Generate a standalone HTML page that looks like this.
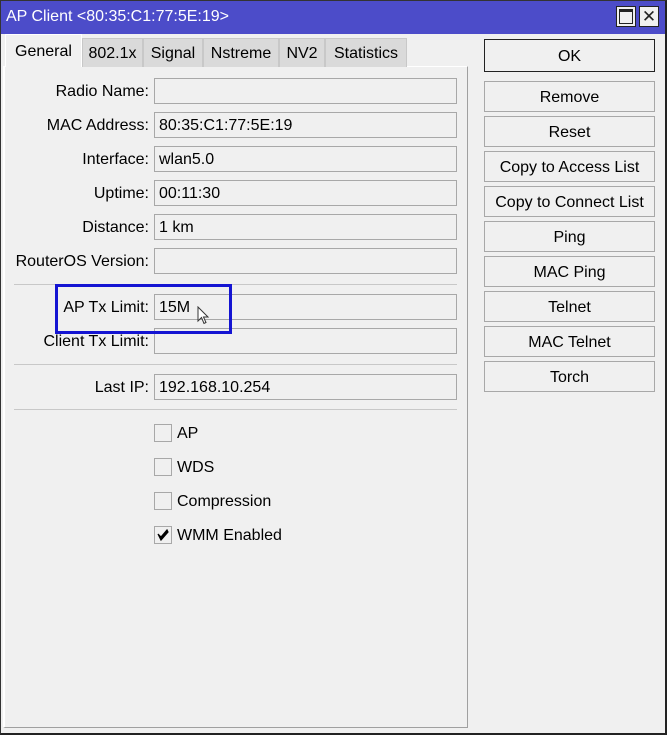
<!DOCTYPE html>
<html><head><style>
*{box-sizing:border-box;margin:0;padding:0}
body{width:667px;height:735px;background:#f0f0f0;font-family:"Liberation Sans",sans-serif;font-size:16px;color:#000;position:relative;overflow:hidden}
.win{position:absolute;left:0;top:0;width:667px;height:735px;background:#f0f0f0}
.frame{position:absolute;left:0;top:0;width:667px;height:735px;border:1px solid #333;border-right:2px solid #222;border-bottom:2px solid #222;pointer-events:none}
.title{position:absolute;left:0;top:0;width:667px;height:34px;background:#4c4cc9;color:#fff;font-size:16px;line-height:34px;padding-left:6px}
.tb{position:absolute;top:6px;width:20px;height:21px;background:#f0f0f0;border:1px solid #222}
.panel{position:absolute;left:3px;top:66px;width:465px;height:662px;border:1px solid #a0a0a0;border-left:2px solid #fff;border-top:1px solid #fff}
.tab{position:absolute;top:38px;height:29px;background:#dadada;border:1px solid #c8c8c8;border-bottom:none;line-height:29px;text-align:center}
.tab.a{background:#f0f0f0;top:34px;height:33px;border-color:#fff;line-height:33px}
.lbl{position:absolute;right:518px;text-align:right;white-space:nowrap;line-height:28px}
.fld{position:absolute;left:154px;width:303px;height:26px;border:1px solid #a8a8a8;background:#f0f0f0;line-height:26px;padding-left:4px}
.sep{position:absolute;left:14px;width:443px;height:1px;background:#c8c8c8}
.cb{position:absolute;left:154px;width:18px;height:18px;border:1px solid #a8a8a8;background:#f0f0f0}
.cbl{position:absolute;left:177px;line-height:20px}
.btn{position:absolute;left:484px;width:171px;height:31px;border:1px solid #a8a8a8;background:#f0f0f0;text-align:center;line-height:31px}
</style></head><body>
<div class="win">
<div class="title">AP Client &lt;80:35:C1:77:5E:19&gt;</div>
<div class="tb" style="left:616px"><div style="position:absolute;left:2px;top:2px;width:14px;height:15px;border:1px solid #222;border-top:3px solid #222"></div></div>
<div class="tb" style="left:639px;font-size:17px;text-align:center;line-height:19px;color:#222">✕</div>
<div class="panel"></div>
<div class="tab a" style="left:5px;width:77px">General</div>
<div class="tab" style="left:82px;width:61px">802.1x</div>
<div class="tab" style="left:143px;width:60px">Signal</div>
<div class="tab" style="left:203px;width:76px">Nstreme</div>
<div class="tab" style="left:279px;width:46px">NV2</div>
<div class="tab" style="left:325px;width:82px">Statistics</div>

<div class="lbl" style="top:78px">Radio Name:</div><div class="fld" style="top:78px"></div>
<div class="lbl" style="top:112px">MAC Address:</div><div class="fld" style="top:112px">80:35:C1:77:5E:19</div>
<div class="lbl" style="top:146px">Interface:</div><div class="fld" style="top:146px">wlan5.0</div>
<div class="lbl" style="top:180px">Uptime:</div><div class="fld" style="top:180px">00:11:30</div>
<div class="lbl" style="top:214px">Distance:</div><div class="fld" style="top:214px">1 km</div>
<div class="lbl" style="top:248px">RouterOS Version:</div><div class="fld" style="top:248px"></div>
<div class="sep" style="top:284px"></div>
<div class="lbl" style="top:294px">AP Tx Limit:</div><div class="fld" style="top:294px">15M</div>
<div class="lbl" style="top:328px">Client Tx Limit:</div><div class="fld" style="top:328px"></div>
<div class="sep" style="top:364px"></div>
<div class="lbl" style="top:374px">Last IP:</div><div class="fld" style="top:374px">192.168.10.254</div>
<div class="sep" style="top:409px"></div>
<div style="position:absolute;left:55px;top:284px;width:177px;height:50px;border:3px solid #1414d2"></div>
<svg style="position:absolute;left:197px;top:306px" width="14" height="20" viewBox="0 0 14 20"><path d="M1 1 L1 15 L4.5 11.5 L7 17.5 L9 16.5 L6.5 11 L11 11 Z" fill="#fff" stroke="#333" stroke-width="1"/></svg>

<div class="cb" style="top:424px"></div><div class="cbl" style="top:424px">AP</div>
<div class="cb" style="top:458px"></div><div class="cbl" style="top:458px">WDS</div>
<div class="cb" style="top:492px"></div><div class="cbl" style="top:492px">Compression</div>
<div class="cb" style="top:526px"><svg width="16" height="16" viewBox="0 0 16 16" style="position:absolute;left:0;top:0"><path d="M3 7 L6 10 L12 3 L13 5 L6 13 Z" fill="#000" stroke="#000" stroke-width="1.2"/></svg></div><div class="cbl" style="top:526px">WMM Enabled</div>

<div class="btn" style="top:39px;height:33px;border:1px solid #222;line-height:33px">OK</div>
<div class="btn" style="top:81px">Remove</div>
<div class="btn" style="top:116px">Reset</div>
<div class="btn" style="top:151px">Copy to Access List</div>
<div class="btn" style="top:186px">Copy to Connect List</div>
<div class="btn" style="top:221px">Ping</div>
<div class="btn" style="top:256px">MAC Ping</div>
<div class="btn" style="top:291px">Telnet</div>
<div class="btn" style="top:326px">MAC Telnet</div>
<div class="btn" style="top:361px">Torch</div>
</div>
<div class="frame"></div>
</body></html>
